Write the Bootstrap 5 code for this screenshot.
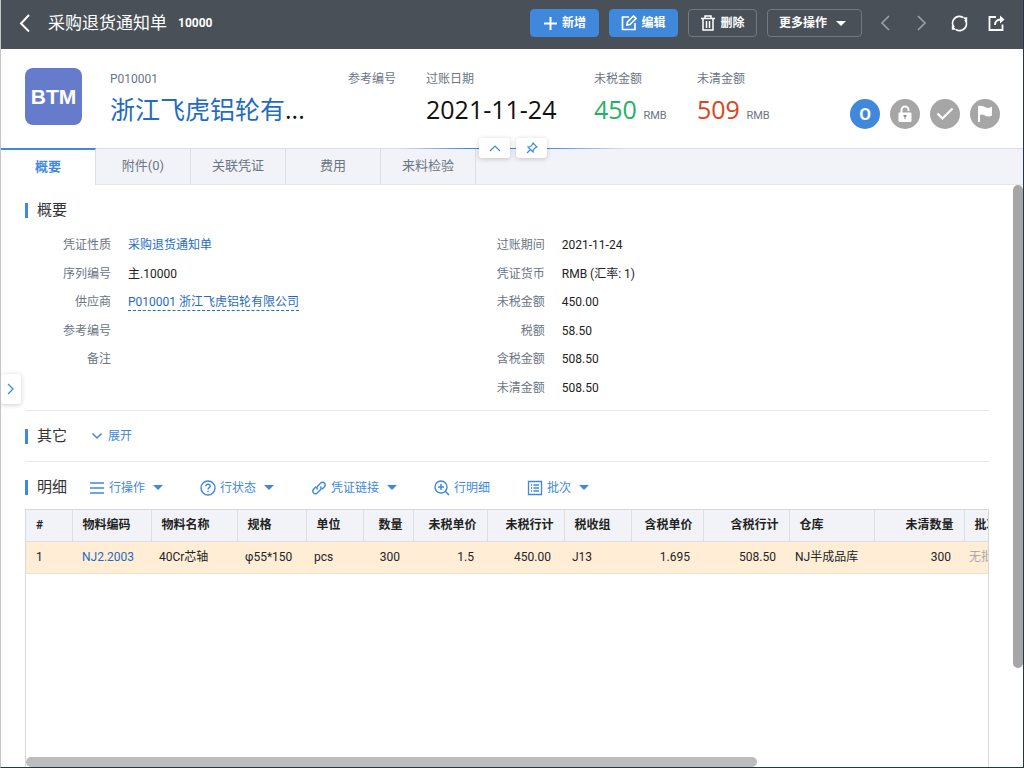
<!DOCTYPE html>
<html lang="zh-CN">
<head>
<meta charset="utf-8">
<meta name="viewport" content="width=device-width, initial-scale=1">
<title>采购退货通知单 10000</title>
<link rel="stylesheet" href="https://cdn.jsdelivr.net/npm/bootstrap@5.3.0/dist/css/bootstrap.min.css">
<style>
  :root { --accent: #3f88dc; --link: #1f6cc0; --muted: #6b7583; --rule: #dcdee4; --pale: #f2f3f8; }
  body { font: 12px/18px Roboto, "Noto Sans CJK SC", sans-serif; color: #222; }
  svg { display: block; flex: none; fill: none; stroke: currentColor; stroke-width: 2; }
  a { color: var(--link); text-decoration: none; }
  button { font: inherit; }
  .frame { height: 100vh; border-left: 1px solid #c4c4c4; border-right: 1px solid #263645; border-bottom: 1px solid #263645; }
  .topbar { height: 49px; background: #495057; color: #fff; padding: 0 18px 3px; }
  .topbar h1 { font-size: 17px; line-height: 24px; font-weight: 400; }
  .doc-no { margin-left: 11px; font-weight: 700; }
  .tool-row { gap: 10px; }
  .btn-tool { --bs-btn-font-size: 12px; --bs-btn-font-weight: 700; --bs-btn-line-height: 18px; --bs-btn-padding-x: 11px; --bs-btn-padding-y: 4px; --bs-btn-border-radius: 4px; --bs-btn-color: #fff; --bs-btn-border-color: #727980; --bs-btn-hover-color: #fff; min-width: 69px; height: 28px; }
  .btn-main { --bs-btn-bg: #3f88dc; --bs-btn-border-color: #3f88dc; --bs-btn-hover-bg: #3478c8; }
  .btn-more { min-width: 95px; gap: 9px; }
  .btn-plain { border: 0; background: none; padding: 0; color: inherit; }
  .pager { gap: 24px; padding-left: 7px; }
  .window-acts { gap: 20px; }
  .dim { color: #9a9fa4; }
  .caret { border: 5px solid transparent; border-top-color: currentColor; border-bottom: 0; }
  .summary { height: 99px; padding: 20px 23px 0 24px; }
  .logo { width: 57px; height: 57px; margin-top: -1px; border-radius: 8px; background: #667bcc; font: 700 21px/57px "Liberation Sans", sans-serif; margin-right: 28px; }
  .facts > div { flex: none; white-space: nowrap; }
  .facts dt { font-weight: 400; color: var(--muted); line-height: 20px; }
  .facts dd { margin: 0; font: 400 25px/36px "Open Sans", "Noto Sans CJK SC", sans-serif; padding-top: 2px; color: #111; }
  .facts small { font: 11px/18px Roboto, sans-serif; color: var(--muted); }
  .f-name { width: 238px; } .f-ref { width: 78px; } .f-date { width: 168px; } .f-net { width: 103px; }
  .facts .good { color: #1fb364; } .facts .due { color: #dc4420; }
  .states { gap: 10px; padding-top: 30px; }
  .round { width: 30px; height: 30px; border-radius: 50%; background: #a6a6a6; color: #fff; }
  .round.on { background: var(--accent); font-weight: 700; font-size: 17px; }
  .tabstrip { height: 37px; background: var(--pale); border-top: 1px solid var(--rule); border-bottom: 1px solid #e6e7ec; }
  .tabstrip .nav-link { width: 95px; height: 35px; padding: 0; font-size: 13px; line-height: 34px; color: var(--muted); text-align: center; border-right: 1px solid var(--rule); border-radius: 0; }
  .tabstrip .active { height: 37px; margin-top: -1px; background: #fff; color: var(--accent); font-weight: 700; line-height: 33px; border-top: 2px solid var(--accent); }
  .glow { top: -1px; left: 39%; width: 22%; height: 1px; background: linear-gradient(90deg, transparent, var(--accent) 30%, var(--accent) 65%, transparent); }
  .toggles { top: -11px; left: 50%; margin-left: -33px; gap: 6px; }
  .float-btn { border: 0; background: #fff; color: var(--accent); border-radius: 3px; box-shadow: 0 1px 5px rgba(0,0,0,.2); width: 31px; height: 20px; padding: 0; }
  .side-btn { top: 189px; left: 0; width: 20px; height: 30px; }
  .page-body { padding: 0 34px 0 24px; }
  .section-title { font-size: 15px; line-height: 15px; font-weight: 400; border-left: 3px solid var(--accent); padding-left: 9px; margin: 0; color: #333; }
  .groups { padding-top: 13px; }
  .group { width: 45%; min-height: 171px; display: grid; grid-template-rows: repeat(6, 1fr); }
  .group > div { display: flex; align-items: center; }
  .group dt { width: 86px; margin-right: 17px; text-align: right; font-weight: 400; color: var(--muted); }
  .group dd { margin: 0; }
  .dashed { border-bottom: 1px dashed var(--link); line-height: 16px; display: inline-block; }
  .overview { height: 226px; padding-top: 18px; border-bottom: 1px solid #e8e8e8; }
  .others { height: 51px; border-bottom: 1px solid #e8e8e8; }
  .others button { gap: 5px; }
  .lines-bar { height: 47px; padding-top: 4px; }
  .lines-menu { gap: 37px; margin-left: 22px; }
  .lines-bar button, .others button { color: var(--accent); }
  .lines-bar button { gap: 4px; }
  .lines-bar .caret { margin-left: 4px; }
  .lines { border: 1px solid #d6d8de; border-bottom: 0; }
  .lines table { width: 1053px; table-layout: fixed; margin: 0; white-space: nowrap; }
  .lines th, .lines td { height: 31px; padding: 0 10px; border: 0; overflow: hidden; vertical-align: middle; }
  .lines thead th { background: var(--pale); border-right: 1px solid var(--rule); border-bottom: 1px solid var(--rule); font-weight: 700; color: #222; }
  .lines td { height: 32px; background: #ffeed5; border-bottom: 1px solid #f3e2c8; padding: 0 13px 0 8px; }
  .lines td:first-child, .lines td:nth-child(2) { padding-left: 10px; }
  .lines td.wh { padding: 0 0 0 6px; }
  .lines td.none { color: #aaa; padding-left: 5px; }
  .bar-y { top: 0; right: 0; width: 10px; height: 83%; background: #a6a6a6; border-radius: 5px; }
  .bar-x { bottom: 0; left: 0; width: 76%; height: 10px; background: #bdbdbd; border-radius: 5px; }
</style>
</head>
<body>
<div class="frame d-flex flex-column overflow-hidden">
  <header class="topbar d-flex align-items-center flex-shrink-0">
    <button class="btn-plain me-3" aria-label="返回"><svg width="13" height="18" viewBox="0 0 13 18"><path d="M10 1 2 9.500l8 8"/></svg></button>
    <h1 class="m-0">采购退货通知单</h1><span class="doc-no">10000</span>
    <div class="tool-row d-flex align-items-center ms-auto">
      <button class="btn btn-tool btn-main d-flex align-items-center justify-content-center gap-1"><svg width="15" height="15" viewBox="0 0 15 15"><path d="M7.500 1v13M1 7.500h13"/></svg>新增</button>
      <button class="btn btn-tool btn-main d-flex align-items-center justify-content-center gap-1"><svg width="16" height="16" viewBox="0 0 16 16"><path d="M8 2H1.500v12.500H14V8M6 10l.5-3L12.500 1l2.500 2.500-6 6z" stroke-width="1.700"/></svg>编辑</button>
      <button class="btn btn-tool d-flex align-items-center justify-content-center gap-1"><svg width="16" height="16" viewBox="0 0 16 16"><path d="M1 3.500h14M5 3V1h6v2M3 4v11h10V4M6.500 6v7M9.500 6v7" stroke-width="1.500"/></svg>删除</button>
      <button class="btn btn-tool btn-more d-flex align-items-center">更多操作<span class="caret"></span></button>
      <div class="pager d-flex align-items-center">
        <button class="btn-plain dim" aria-label="上一张"><svg width="12" height="16" viewBox="0 0 12 16"><path d="m10 1-7 7 7 7" stroke-width="1.700"/></svg></button>
        <button class="btn-plain dim" aria-label="下一张"><svg width="12" height="16" viewBox="0 0 12 16"><path d="m3 1 7 7-7 7" stroke-width="1.700"/></svg></button>
        <div class="window-acts d-flex align-items-center">
          <button class="btn-plain" aria-label="刷新"><svg width="17" height="17" viewBox="0 0 17 17"><path d="M3 12.300A6.700 6.700 0 0 1 12 2.600M14 4.700A6.700 6.700 0 0 1 5 14.400" stroke-width="1.800"/><path d="M.8 10.200v4.600h4.600zM16.200 6.800V2.200h-4.600z" fill="currentColor" stroke="none"/></svg></button>
          <button class="btn-plain" aria-label="新窗口打开"><svg width="17" height="17" viewBox="0 0 17 17"><path d="M8 2H1.500v13h13V9.500M7 10q0-5 5.500-5.500" stroke-width="1.800"/><path d="m12 .5 4.500 4-4.500 4z" fill="currentColor" stroke="none"/></svg></button>
        </div>
      </div>
    </div>
  </header>

  <section class="summary d-flex flex-shrink-0">
    <div class="logo text-white text-center flex-shrink-0">BTM</div>
    <dl class="facts d-flex m-0">
      <div class="f-name"><dt>P010001</dt><dd><a href="#">浙江飞虎铝轮有</a>...</dd></div>
      <div class="f-ref"><dt>参考编号</dt></div>
      <div class="f-date"><dt>过账日期</dt><dd>2021-11-24</dd></div>
      <div class="f-net"><dt>未税金额</dt><dd class="good">450 <small>RMB</small></dd></div>
      <div><dt>未清金额</dt><dd class="due">509 <small>RMB</small></dd></div>
    </dl>
    <div class="states d-flex ms-auto">
      <span class="round on d-flex align-items-center justify-content-center">O</span>
      <span class="round d-flex align-items-center justify-content-center"><svg width="16" height="18" viewBox="0 0 16 18"><path d="M4.500 8V5a3.500 3.500 0 0 1 7 0v1"/><rect x="1.500" y="7.500" width="13" height="9.500" rx="1" fill="currentColor" stroke="none"/><path d="M6.500 10h3v1.500L8.500 12v2h-1v-2l-1-.5z" fill="#8c8c8c" stroke="none"/></svg></span>
      <span class="round d-flex align-items-center justify-content-center"><svg width="18" height="14" viewBox="0 0 18 14"><path d="m1.500 6.500 5 5L16.500 1.500" stroke-width="2.200"/></svg></span>
      <span class="round d-flex align-items-center justify-content-center"><svg width="16" height="18" viewBox="0 0 16 18"><path d="M1 1q3-1 7 1t7-.5v9q-3 2-7 0t-5 0V17H1z" fill="currentColor" stroke="none"/></svg></span>
    </div>
  </section>

  <nav class="tabstrip nav flex-shrink-0 position-relative">
    <a class="nav-link active" href="#">概要</a>
    <a class="nav-link" href="#">附件(0)</a>
    <a class="nav-link" href="#">关联凭证</a>
    <a class="nav-link" href="#">费用</a>
    <a class="nav-link" href="#">来料检验</a>
    <div class="glow position-absolute"></div>
    <div class="toggles position-absolute d-flex">
      <button class="float-btn d-flex align-items-center justify-content-center" aria-label="收起"><svg width="12" height="8" viewBox="0 0 12 8"><path d="m1 7 5-5 5 5" stroke-width="1.200"/></svg></button>
      <button class="float-btn d-flex align-items-center justify-content-center" aria-label="固定"><svg width="12" height="12" viewBox="0 0 12 12"><path d="m7 1 4 4-1.500.5-2 2L7 10 2 5l2.500-.5 2-2zM4.500 7.500 1 11" stroke-width="1.200"/></svg></button>
    </div>
  </nav>

  <main class="page-body flex-grow-1 d-flex flex-column position-relative overflow-hidden">
    <section class="overview flex-shrink-0">
      <h2 class="section-title">概要</h2>
      <div class="groups d-flex">
        <dl class="group m-0">
          <div><dt>凭证性质</dt><dd><a href="#">采购退货通知单</a></dd></div>
          <div><dt>序列编号</dt><dd>主.10000</dd></div>
          <div><dt>供应商</dt><dd><a href="#" class="dashed">P010001 浙江飞虎铝轮有限公司</a></dd></div>
          <div><dt>参考编号</dt></div>
          <div><dt>备注</dt></div>
        </dl>
        <dl class="group m-0">
          <div><dt>过账期间</dt><dd>2021-11-24</dd></div>
          <div><dt>凭证货币</dt><dd>RMB (汇率: 1)</dd></div>
          <div><dt>未税金额</dt><dd>450.00</dd></div>
          <div><dt>税额</dt><dd>58.50</dd></div>
          <div><dt>含税金额</dt><dd>508.50</dd></div>
          <div><dt>未清金额</dt><dd>508.50</dd></div>
        </dl>
      </div>
    </section>

    <section class="others d-flex align-items-center flex-shrink-0">
      <h2 class="section-title">其它</h2>
      <button class="btn-plain d-flex align-items-center ms-4"><svg width="12" height="8" viewBox="0 0 12 8"><path d="m1.500 1.500 4.500 4.500 4.500-4.500" stroke-width="1.500"/></svg>展开</button>
    </section>

    <div class="lines-bar d-flex align-items-center flex-shrink-0">
      <h2 class="section-title">明细</h2>
      <div class="lines-menu d-flex">
        <button class="btn-plain d-flex align-items-center"><svg width="16" height="16" viewBox="0 0 16 16"><path d="M1 3h14M1 8h14M1 13h14" stroke-width="1.500"/></svg>行操作<span class="caret"></span></button>
        <button class="btn-plain d-flex align-items-center"><svg width="16" height="16" viewBox="0 0 16 16"><circle cx="8" cy="8" r="7" stroke-width="1.400"/><path d="M5.800 6.200q.2-2 2.200-2t2.200 2c0 1.500-2.200 1.500-2.200 3.300M8 10.700v1.500" stroke-width="1.400"/></svg>行状态<span class="caret"></span></button>
        <button class="btn-plain d-flex align-items-center"><svg width="16" height="16" viewBox="0 0 16 16"><path d="M6.500 9.500Q5 7.500 7 5.800l2.500-2.600c2.800-2.500 6.300 1 3.800 3.800L11 9.300M9.500 6.500Q11 8.500 9 10.200l-2.500 2.600C3.700 15.300.2 11.800 2.700 9L5 6.700" stroke-width="1.400"/></svg>凭证链接<span class="caret"></span></button>
        <button class="btn-plain d-flex align-items-center"><svg width="16" height="16" viewBox="0 0 16 16"><circle cx="7" cy="7" r="6" stroke-width="1.400"/><path d="M7 4v6M4 7h6M11.500 11.500 15 15" stroke-width="1.500"/></svg>行明细</button>
        <button class="btn-plain d-flex align-items-center"><svg width="16" height="16" viewBox="0 0 16 16"><path d="M1.500 1.500h13v13h-13zM4 5h1.200M4 8h1.200M4 11h1.200M6.500 5H12M6.500 8H12M6.500 11H12" stroke-width="1.300"/></svg>批次<span class="caret"></span></button>
      </div>
    </div>

    <div class="lines flex-grow-1 overflow-hidden position-relative">
      <table class="table">
        <colgroup><col style="width:46px"><col style="width:79px"><col style="width:86px"><col style="width:69px"><col style="width:57px"><col style="width:50px"><col style="width:74px"><col style="width:77px"><col style="width:67px"><col style="width:72px"><col style="width:86px"><col style="width:85px"><col style="width:90px"><col></colgroup>
        <thead><tr><th>#</th><th>物料编码</th><th>物料名称</th><th>规格</th><th>单位</th><th class="text-end">数量</th><th class="text-end">未税单价</th><th class="text-end">未税行计</th><th>税收组</th><th class="text-end">含税单价</th><th class="text-end">含税行计</th><th>仓库</th><th class="text-end">未清数量</th><th>批次</th></tr></thead>
        <tbody><tr><td>1</td><td><a href="#">NJ2.2003</a></td><td>40Cr芯轴</td><td>φ55*150</td><td>pcs</td><td class="text-end">300</td><td class="text-end">1.5</td><td class="text-end">450.00</td><td>J13</td><td class="text-end">1.695</td><td class="text-end">508.50</td><td class="wh">NJ半成品库</td><td class="text-end">300</td><td class="none">无批次</td></tr></tbody>
      </table>
      <div class="bar-x position-absolute"></div>
    </div>
    <div class="bar-y position-absolute"></div>
    <button class="float-btn side-btn position-absolute d-flex align-items-center justify-content-center" aria-label="展开侧栏"><svg width="8" height="12" viewBox="0 0 8 12"><path d="m1 1 5 5-5 5" stroke-width="1.300"/></svg></button>
  </main>
</div>
<script src="https://cdn.jsdelivr.net/npm/bootstrap@5.3.0/dist/js/bootstrap.bundle.min.js"></script>
</body>
</html>
